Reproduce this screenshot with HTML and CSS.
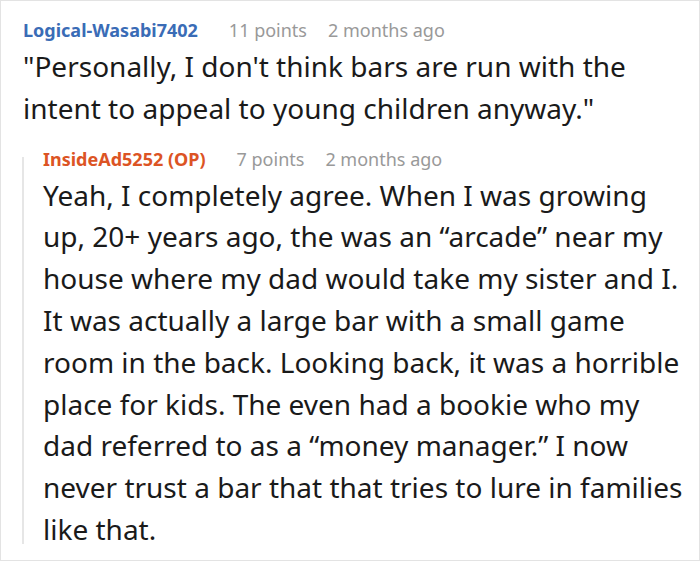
FILE: index.html
```html
<!DOCTYPE html>
<html>
<head>
<meta charset="utf-8">
<link rel="stylesheet" href="styles.css">
</head>
<body>
<div class="card">
  <div class="comment">
    <div class="meta">
      <span class="author">Logical-Wasabi7402</span>
      <span class="points">11 points</span>
      <span class="time">2 months ago</span>
    </div>
    <p class="body">"Personally, I don't think bars are run with the intent to appeal to young children anyway."</p>
    <div class="reply">
      <div class="thread-line"></div>
      <div class="reply-content">
        <div class="meta">
          <span class="author op">InsideAd5252 (OP)</span>
          <span class="points">7 points</span>
          <span class="time">2 months ago</span>
        </div>
        <p class="body">Yeah, I completely agree. When I was growing up, 20+ years ago, the was an “arcade” near my house where my dad would take my sister and I. It was actually a large bar with a small game room in the back. Looking back, it was a horrible place for kids. The even had a bookie who my dad referred to as a “money manager.” I now never trust a bar that that tries to lure in families like that.</p>
      </div>
    </div>
  </div>
</div>
</body>
</html>
```

FILE: styles.css
```css
html, body {
  margin: 0;
  padding: 0;
  background: #fff;
}
.card {
  box-sizing: border-box;
  width: 700px;
  height: 561px;
  border: 1px solid #e3e3e3;
  padding: 13px 9px 0 22px;
  font-family: "Noto Sans", sans-serif;
  color: #1a1a1a;
  overflow: hidden;
}
.meta {
  display: flex;
  align-items: baseline;
  font-size: 18px;
  line-height: 32px;
  white-space: nowrap;
}
.author {
  font-weight: bold;
  color: #3a6cb6;
  margin-right: 31px;
}
.author.op {
  color: #dc5424;
}
.points {
  color: #999;
  margin-right: 21px;
}
.time {
  color: #999;
}
.body {
  margin: 0;
  font-size: 28px;
  line-height: 41.8px;
}
.reply {
  display: flex;
  margin-top: 13px;
  margin-left: -1px;
}
.thread-line {
  flex: none;
  width: 2px;
  margin: 14px 0 7px;
  background: #e6e6e6;
}
.reply-content {
  flex: 1;
  min-width: 0;
  padding-left: 19px;
}
```
